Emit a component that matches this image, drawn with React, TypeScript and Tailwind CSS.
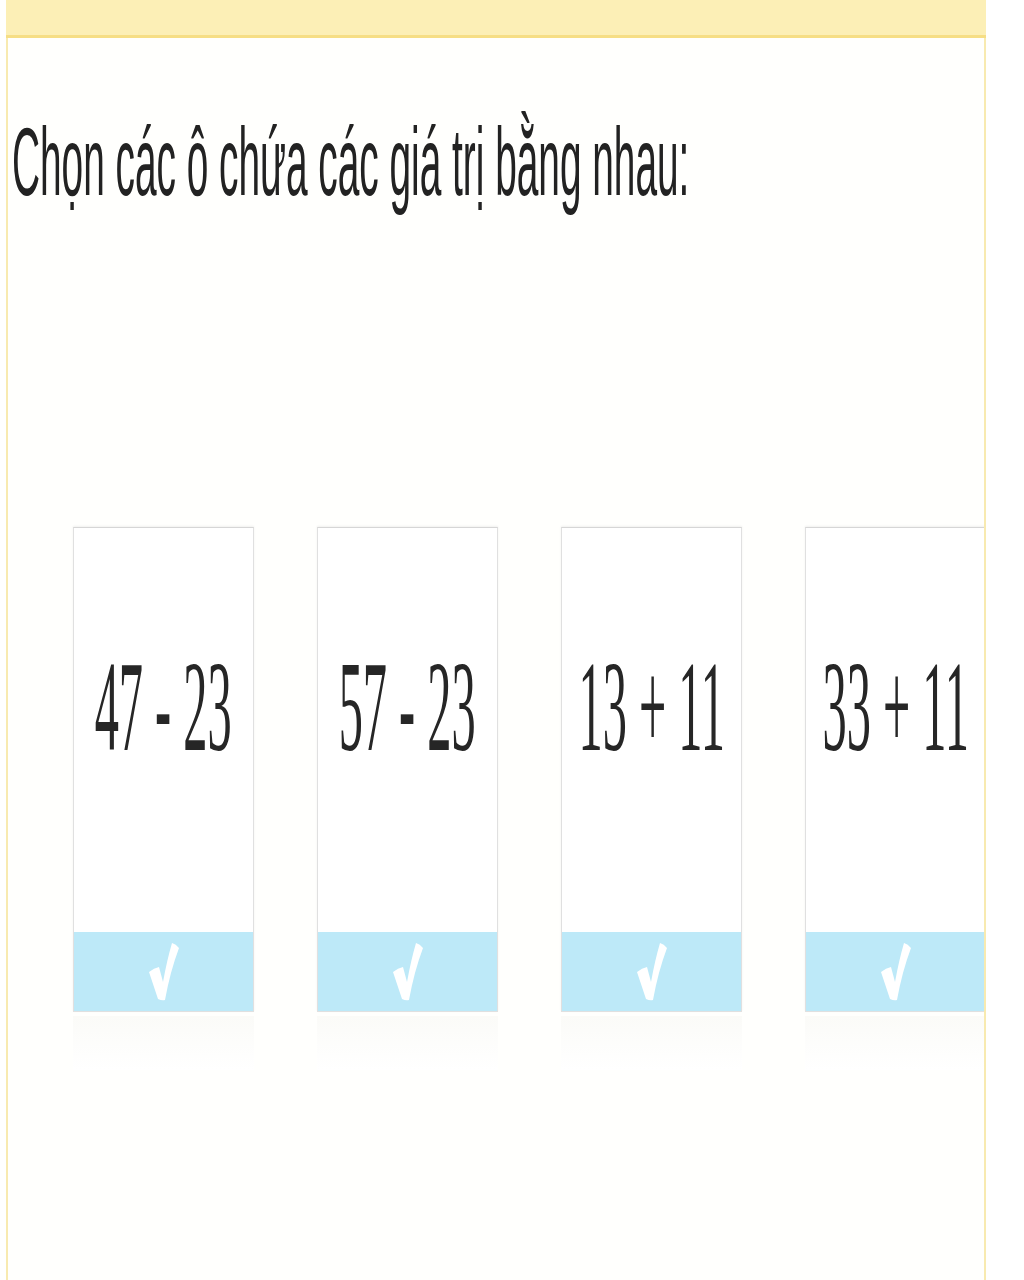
const cards = ["47 - 23", "57 - 23", "13 + 11", "33 + 11"];

function Check() {
  return (
    <svg width="30" height="60" viewBox="0 0 30 60" className="block">
      <path d="M0 30 Q5 26 10 25 L14 40 Q18 18 23 1 Q27 2 30 6 Q21 30 16 58 Q13 59 9 57 Z" fill="#ffffff" />
    </svg>
  );
}

function Card({ label }: { label: string }) {
  return (
    <div className="flex w-[181px] shrink-0 flex-col">
      <div className="flex h-[485px] flex-col border border-[#e0e0e0] border-t-[#d6d6d6] bg-white shadow-[0_-1px_2px_rgba(0,0,0,0.06)]">
        <div className="flex h-[404px] justify-center overflow-visible">
          <span
            className="mt-[113px] inline-block scale-x-[0.372] whitespace-nowrap text-[130px] leading-none text-[#262626]"
            style={{ fontFamily: '"Liberation Serif", "DejaVu Serif", serif' }}
          >
            {label}
          </span>
        </div>
        <div className="flex flex-1 items-center justify-center bg-[#bde9f8]">
          <Check />
        </div>
      </div>
      <div className="mt-1 h-[54px] bg-gradient-to-b from-[#fbfbf8] to-white" />
    </div>
  );
}

export default function App() {
  return (
    <div className="h-[1280px] w-[1024px] overflow-hidden bg-white">
      <div className="ml-[6px] w-[980px]">
        <div className="h-[38px] border-b-[3px] border-[#f6de85] bg-[#fcefb6]" />
        <div className="h-[1242px] overflow-hidden border-x-2 border-[#f8eab0] bg-[#fffffd]">
          <div className="pl-[4px] pt-[75px]">
            <span
              className="inline-block origin-left scale-x-[0.4] whitespace-nowrap text-[97px] leading-none text-[#222]"
              style={{ fontFamily: '"Liberation Sans", Arial, sans-serif' }}
            >
              Chọn các ô chứa các giá trị bằng nhau:
            </span>
          </div>
          <div className="mt-[317px] flex gap-[63px] pl-[65px]">
            {cards.map((c) => (
              <Card key={c} label={c} />
            ))}
          </div>
        </div>
      </div>
    </div>
  );
}
